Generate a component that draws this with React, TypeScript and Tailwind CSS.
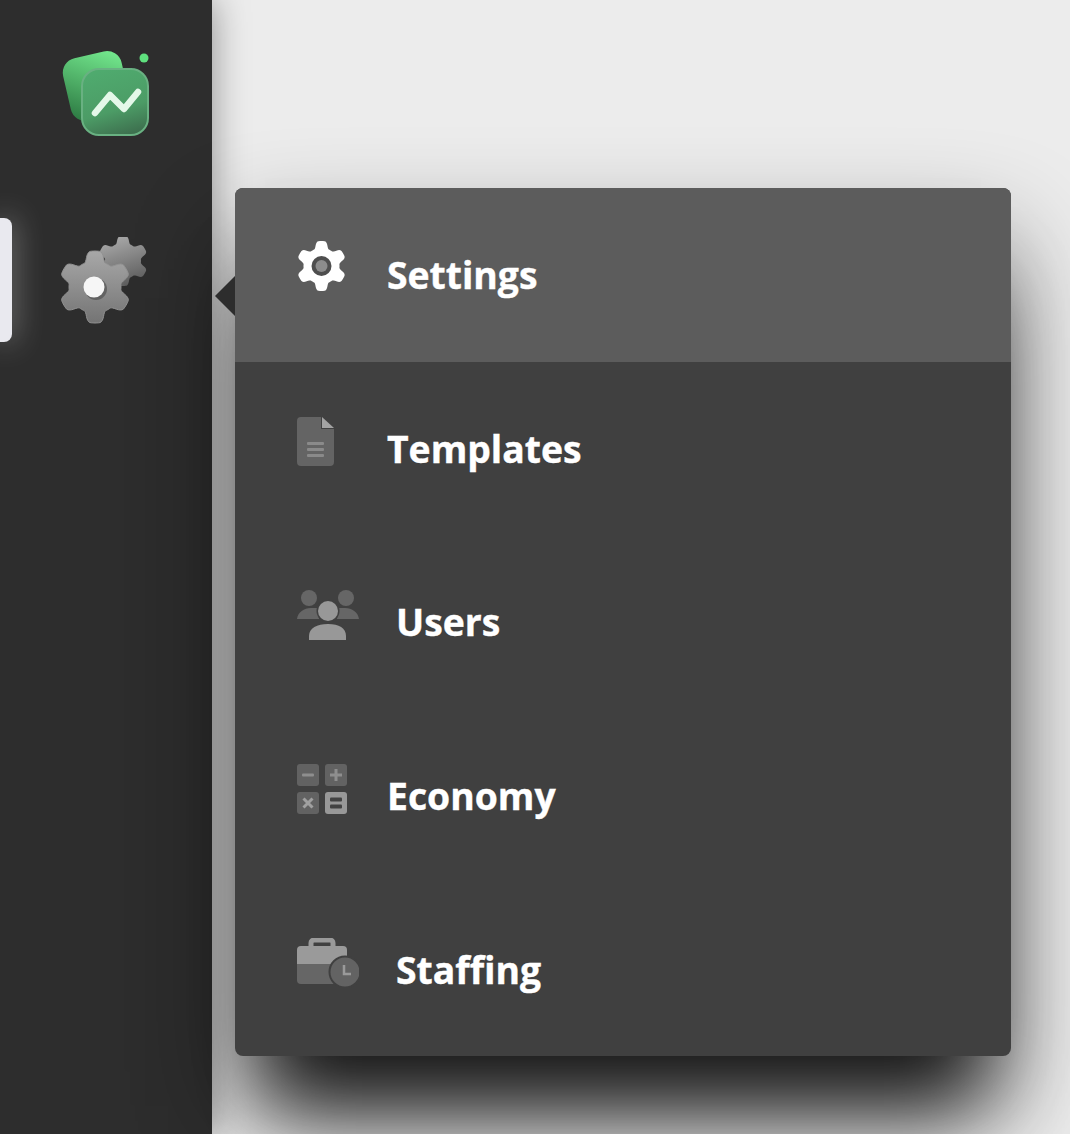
import type { ReactNode } from "react";

// six lobed cog outline: flat wide teeth, softened with a moving average
const cogPath = (cx: number, cy: number, outer: number, inner: number) => {
  const n = 180;
  const raw: number[] = [];
  for (let i = 0; i < n; i++) {
    const t = (i / n) * Math.PI * 2;
    raw.push(Math.max(-1, Math.min(1, Math.cos(6 * t) * 2.4 + 0.2)));
  }
  const pts: string[] = [];
  for (let i = 0; i < n; i++) {
    let sum = 0;
    for (let k = -2; k <= 2; k++) sum += raw[(i + k + n) % n];
    const r = inner + ((outer - inner) * (sum / 5 + 1)) / 2;
    const a = (i / n) * Math.PI * 2 - Math.PI / 2;
    pts.push(`${(cx + r * Math.cos(a)).toFixed(2)} ${(cy + r * Math.sin(a)).toFixed(2)}`);
  }
  return `M${pts.join("L")}Z`;
};

const Logo = () => (
  <svg width="100" height="96" viewBox="0 0 100 96">
    <defs>
      <linearGradient id="logoBack" x1="0.8" y1="0" x2="0.2" y2="1">
        <stop offset="0" stopColor="#72e68c" />
        <stop offset="1" stopColor="#2f7d45" />
      </linearGradient>
      <linearGradient id="logoFront" x1="0.4" y1="0" x2="0.7" y2="1">
        <stop offset="0" stopColor="#4faa6e" />
        <stop offset="0.6" stopColor="#4c9c66" />
        <stop offset="1" stopColor="#3d6f4e" />
      </linearGradient>
    </defs>
    <rect x="10" y="9" width="60" height="64" rx="15" transform="rotate(-13 40 40)" fill="url(#logoBack)" />
    <rect x="26" y="24" width="66" height="66" rx="17" fill="url(#logoFront)" stroke="#69b182" strokeWidth="2" />
    <path d="M39 68 L54 50 L68 64 L82 47" fill="none" stroke="#e4f8e9" strokeWidth="6.5" strokeLinecap="round" strokeLinejoin="round" />
    <circle cx="88" cy="13" r="4.5" fill="#5fe07e" />
  </svg>
);

const SettingsCogs = () => (
  <svg width="90" height="90" viewBox="0 0 90 90">
    <defs>
      <linearGradient id="cogBack" x1="0.4" y1="0" x2="0.7" y2="1">
        <stop offset="0" stopColor="#a8a8a8" />
        <stop offset="1" stopColor="#5a5a5a" />
      </linearGradient>
      <linearGradient id="cogFront" x1="0.5" y1="0" x2="0.5" y2="1">
        <stop offset="0" stopColor="#a8a8a8" />
        <stop offset="1" stopColor="#747474" />
      </linearGradient>
    </defs>
    <path d={cogPath(64, 24, 25, 18)} fill="url(#cogBack)" />
    <path d={cogPath(36, 50, 36, 26)} fill="url(#cogFront)" stroke="#929292" strokeWidth="1" />
    <circle cx="37" cy="52" r="11" fill="#4a4a4a" opacity="0.6" />
    <circle cx="35" cy="50" r="10.5" fill="#f6f6f6" />
  </svg>
);

const SettingsIcon = () => (
  <svg width="49" height="50" viewBox="0 0 49 50">
    <path d={cogPath(24.5, 25, 25, 18)} fill="#ffffff" />
    <circle cx="24.5" cy="25" r="10" fill="#4e4e4e" />
    <circle cx="24.5" cy="25" r="6" fill="#8c8c8c" />
  </svg>
);

const TemplatesIcon = () => (
  <svg width="37" height="49" viewBox="0 0 37 49">
    <path d="M4 0H24V12H37V45a4 4 0 0 1-4 4H4a4 4 0 0 1-4-4V4a4 4 0 0 1 4-4Z" fill="#646464" />
    <path d="M25 0L37 11H25Z" fill="#a3a3a3" />
    <rect x="10" y="25" width="17" height="3" rx="1" fill="#8a8a8a" />
    <rect x="10" y="31" width="17" height="3" rx="1" fill="#8a8a8a" />
    <rect x="10" y="37" width="17" height="3" rx="1" fill="#8a8a8a" />
  </svg>
);

const UsersIcon = () => (
  <svg width="62" height="50" viewBox="0 0 62 50">
    <circle cx="12" cy="8" r="8" fill="#666666" />
    <circle cx="49" cy="8" r="8" fill="#666666" />
    <path d="M0 29C1 22 7 18 14 18H20C21 23 22 26 22 29Z" fill="#666666" />
    <path d="M62 29C61 22 55 18 48 18H42C41 23 40 26 40 29Z" fill="#666666" />
    <circle cx="31" cy="21" r="11.5" fill="#404040" />
    <circle cx="31" cy="21" r="10" fill="#989898" />
    <path d="M12 50V46C12 38 20 34 31 34C42 34 49 38 49 46V50Z" fill="#989898" />
  </svg>
);

const EconomyIcon = () => (
  <svg width="50" height="50" viewBox="0 0 50 50">
    <rect x="0" y="0" width="22" height="22" rx="3" fill="#626262" />
    <rect x="28" y="0" width="22" height="22" rx="3" fill="#626262" />
    <rect x="0" y="28" width="22" height="22" rx="3" fill="#626262" />
    <rect x="28" y="28" width="22" height="22" rx="3" fill="#989898" />
    <rect x="5" y="9.5" width="12" height="3" rx="1" fill="#8e8e8e" />
    <path d="M33 11h12M39 5v12" stroke="#8e8e8e" strokeWidth="3" />
    <path d="M6.5 34.5l9 9M15.5 34.5l-9 9" stroke="#a0a0a0" strokeWidth="3" />
    <rect x="33" y="33.5" width="12" height="4" rx="1" fill="#424242" />
    <rect x="33" y="40.5" width="12" height="4" rx="1" fill="#424242" />
  </svg>
);

const StaffingIcon = () => (
  <svg width="62" height="50" viewBox="0 0 62 50">
    <path d="M14 9V5a3 3 0 0 1 3-3H33a3 3 0 0 1 3 3V9" fill="none" stroke="#9a9a9a" strokeWidth="5" />
    <path d="M4 8H46a4 4 0 0 1 4 4V26H0V12a4 4 0 0 1 4-4Z" fill="#9a9a9a" />
    <path d="M0 26H50V42a4 4 0 0 1-4 4H4a4 4 0 0 1-4-4Z" fill="#666666" />
    <circle cx="48" cy="34" r="15.5" fill="#636363" stroke="#404040" strokeWidth="2" />
    <path d="M47 27V36H54" fill="none" stroke="#9a9a9a" strokeWidth="2.5" />
  </svg>
);

const MenuRow = ({
  icon,
  label,
  iconClass,
  active,
}: {
  icon: ReactNode;
  label: string;
  iconClass: string;
  active?: boolean;
}) => (
  <div className={`flex flex-1 items-center pl-[62px] ${active ? "rounded-t-lg bg-[#5c5c5c]" : ""}`}>
    <div className={`flex shrink-0 ${iconClass}`}>{icon}</div>
    <span className="text-[37.3px] leading-none font-bold text-white [-webkit-text-stroke:0.4px_white]">{label}</span>
  </div>
);

export default function App() {
  return (
    <div className="relative flex h-screen overflow-hidden bg-[#ececec] font-['Open_Sans',sans-serif]">
      <aside className="relative flex h-full w-[212px] shrink-0 flex-col items-center bg-[#2d2d2d] shadow-[0_0_34px_rgba(0,0,0,0.4)]">
        <div className="mt-[45px] flex">
          <Logo />
        </div>
        <div className="mt-[96px] ml-[-4px] flex">
          <SettingsCogs />
        </div>
        <div className="absolute top-[218px] left-0 h-[124px] w-[12px] rounded-r-lg bg-[#e9e9ef] shadow-[0_0_30px_rgba(255,255,255,0.5)]" />
      </aside>

      <div className="absolute top-[188px] left-[235px] flex h-[868px] w-[776px] flex-col rounded-lg bg-[#404040] shadow-[0_80px_80px_-30px_rgba(0,0,0,0.85),0_50px_100px_rgba(0,0,0,0.45)]">
        <MenuRow active icon={<SettingsIcon />} label="Settings" iconClass="mt-[-18px] mr-[41px]" />
        <MenuRow icon={<TemplatesIcon />} label="Templates" iconClass="mt-[-14px] mr-[53px]" />
        <MenuRow icon={<UsersIcon />} label="Users" iconClass="mt-[-14px] mr-[37px]" />
        <MenuRow icon={<EconomyIcon />} label="Economy" iconClass="mt-[-14px] mr-[40px]" />
        <MenuRow icon={<StaffingIcon />} label="Staffing" iconClass="mt-[-12px] mr-[37px]" />
      </div>
      <div className="absolute top-[276px] left-[215px] h-0 w-0 border-y-[20px] border-r-[20px] border-y-transparent border-r-[#2d2d2d]" />
    </div>
  );
}
